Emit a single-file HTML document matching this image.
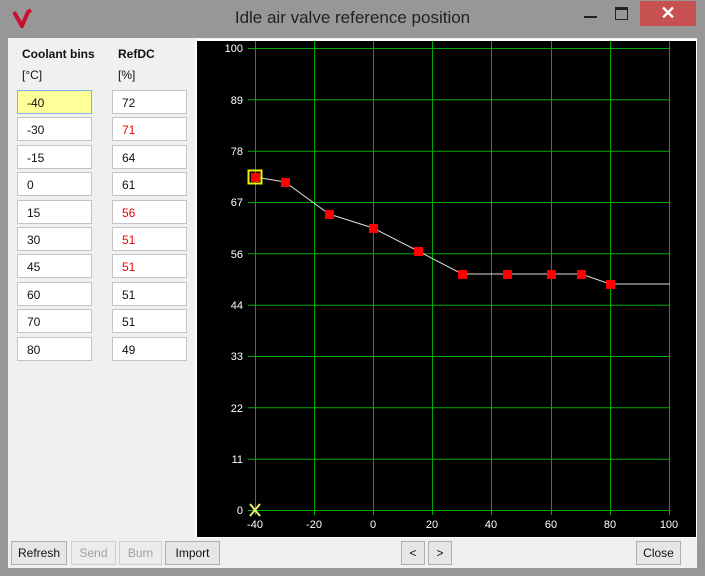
<!DOCTYPE html>
<html><head><meta charset="utf-8"><style>
body{margin:0;width:705px;height:576px;background:#979797;position:relative;overflow:hidden;font-family:"Liberation Sans",sans-serif}
.title{position:absolute;left:0;top:8px;width:705px;text-align:center;font-size:17px;color:#222}
.client{position:absolute;left:8px;top:38px;width:689px;height:530px;background:#f0f0f0}
.h{position:absolute;font-size:12px;font-weight:bold;color:#111}
.u{position:absolute;font-size:12px;color:#111}
.in{position:absolute;box-sizing:border-box;height:24px;border:1px solid #c4c4c4;background:#fff;font-size:12px;padding:5px 0 0 9px;color:#111}
.btn{position:absolute;top:541px;height:24px;box-sizing:border-box;border:1px solid #adadad;background:#e6e6e6;font-size:12px;text-align:center;line-height:22px;color:#111}
.dis{color:#a0a0a0;border-color:#cfcfcf;background:#ececec}
</style></head><body>
<svg style="position:absolute;left:12px;top:8px" width="22" height="20"><path d="M2 4 L10 18 L16 4 L19 2" fill="none" stroke="#c8102e" stroke-width="4"/></svg>
<div class="title">Idle air valve reference position</div>
<div style="position:absolute;left:584px;top:16px;width:13px;height:2px;background:#222"></div>
<div style="position:absolute;left:615px;top:7px;width:11px;height:9px;border:1.5px solid #222;border-top-width:3px"></div>
<div style="position:absolute;left:640px;top:1px;width:96px;height:25px;background:#c75050;color:#fff;font-size:18px;font-weight:bold;text-align:center;width:56px;line-height:24px">✕</div>
<div class="client"></div>
<div class="h" style="left:22px;top:47px">Coolant bins</div>
<div class="h" style="left:118px;top:47px">RefDC</div>
<div class="u" style="left:22px;top:68px">[°C]</div>
<div class="u" style="left:118px;top:68px">[%]</div>
<div class="in" style="left:17px;top:90px;width:75px;background:#ffff99;border-color:#7eb4ea">-40</div><div class="in" style="left:112px;top:90px;width:75px">72</div>
<div class="in" style="left:17px;top:117px;width:75px">-30</div><div class="in" style="left:112px;top:117px;width:75px;color:#e00">71</div>
<div class="in" style="left:17px;top:145px;width:75px">-15</div><div class="in" style="left:112px;top:145px;width:75px">64</div>
<div class="in" style="left:17px;top:172px;width:75px">0</div><div class="in" style="left:112px;top:172px;width:75px">61</div>
<div class="in" style="left:17px;top:200px;width:75px">15</div><div class="in" style="left:112px;top:200px;width:75px;color:#e00">56</div>
<div class="in" style="left:17px;top:227px;width:75px">30</div><div class="in" style="left:112px;top:227px;width:75px;color:#e00">51</div>
<div class="in" style="left:17px;top:254px;width:75px">45</div><div class="in" style="left:112px;top:254px;width:75px;color:#e00">51</div>
<div class="in" style="left:17px;top:282px;width:75px">60</div><div class="in" style="left:112px;top:282px;width:75px">51</div>
<div class="in" style="left:17px;top:309px;width:75px">70</div><div class="in" style="left:112px;top:309px;width:75px">51</div>
<div class="in" style="left:17px;top:337px;width:75px">80</div><div class="in" style="left:112px;top:337px;width:75px">49</div>
<svg style="position:absolute;left:0;top:0" width="705" height="576" font-family="Liberation Sans" font-size="11" fill="#fff">
<rect x="195" y="39" width="502" height="499" fill="#fff"/>
<rect x="197" y="41" width="499" height="496" fill="#000"/>
<g stroke="#0a0" stroke-width="1">
<line x1="248" y1="48.5" x2="670" y2="48.5"/><line x1="248" y1="99.8" x2="670" y2="99.8"/><line x1="248" y1="151.2" x2="670" y2="151.2"/><line x1="248" y1="202.5" x2="670" y2="202.5"/><line x1="248" y1="253.8" x2="670" y2="253.8"/><line x1="248" y1="305.2" x2="670" y2="305.2"/><line x1="248" y1="356.5" x2="670" y2="356.5"/><line x1="248" y1="407.8" x2="670" y2="407.8"/><line x1="248" y1="459.2" x2="670" y2="459.2"/><line x1="248" y1="510.5" x2="670" y2="510.5"/>
<line x1="255.5" y1="41" x2="255.5" y2="515"/><line x1="314.5" y1="41" x2="314.5" y2="515"/><line x1="373.5" y1="41" x2="373.5" y2="515"/><line x1="432.5" y1="41" x2="432.5" y2="515"/><line x1="491.5" y1="41" x2="491.5" y2="515"/><line x1="551.5" y1="41" x2="551.5" y2="515"/><line x1="610.5" y1="41" x2="610.5" y2="515"/><line x1="669.5" y1="41" x2="669.5" y2="515"/>
</g>
<g text-anchor="end"><text x="243" y="52">100</text><text x="243" y="104">89</text><text x="243" y="155">78</text><text x="243" y="206">67</text><text x="243" y="258">56</text><text x="243" y="309">44</text><text x="243" y="360">33</text><text x="243" y="412">22</text><text x="243" y="463">11</text><text x="243" y="514">0</text></g>
<g text-anchor="middle"><text x="255" y="528">-40</text><text x="314" y="528">-20</text><text x="373" y="528">0</text><text x="432" y="528">20</text><text x="491" y="528">40</text><text x="551" y="528">60</text><text x="610" y="528">80</text><text x="669" y="528">100</text></g>
<polyline fill="none" stroke="#ddd" stroke-width="1" points="255,177 285,182 329,214 373,228 418,251 462,274 507,274 551,274 581,274 610,284 670,284"/>
<g fill="#f00"><rect x="251" y="173" width="9" height="9"/><rect x="281" y="178" width="9" height="9"/><rect x="325" y="210" width="9" height="9"/><rect x="369" y="224" width="9" height="9"/><rect x="414" y="247" width="9" height="9"/><rect x="458" y="270" width="9" height="9"/><rect x="503" y="270" width="9" height="9"/><rect x="547" y="270" width="9" height="9"/><rect x="577" y="270" width="9" height="9"/><rect x="606" y="280" width="9" height="9"/></g>
<rect x="248.5" y="170.5" width="13" height="13" fill="none" stroke="#ee0" stroke-width="2"/>
<path d="M250 504 L260 516 M260 504 L250 516" stroke="#ee6" stroke-width="2"/>
</svg>
<div class="btn" style="left:11px;width:56px">Refresh</div>
<div class="btn dis" style="left:71px;width:45px">Send</div>
<div class="btn dis" style="left:119px;width:43px">Burn</div>
<div class="btn" style="left:165px;width:55px">Import</div>
<div class="btn" style="left:401px;width:24px">&lt;</div>
<div class="btn" style="left:428px;width:24px">&gt;</div>
<div class="btn" style="left:636px;width:45px">Close</div>
</body></html>
